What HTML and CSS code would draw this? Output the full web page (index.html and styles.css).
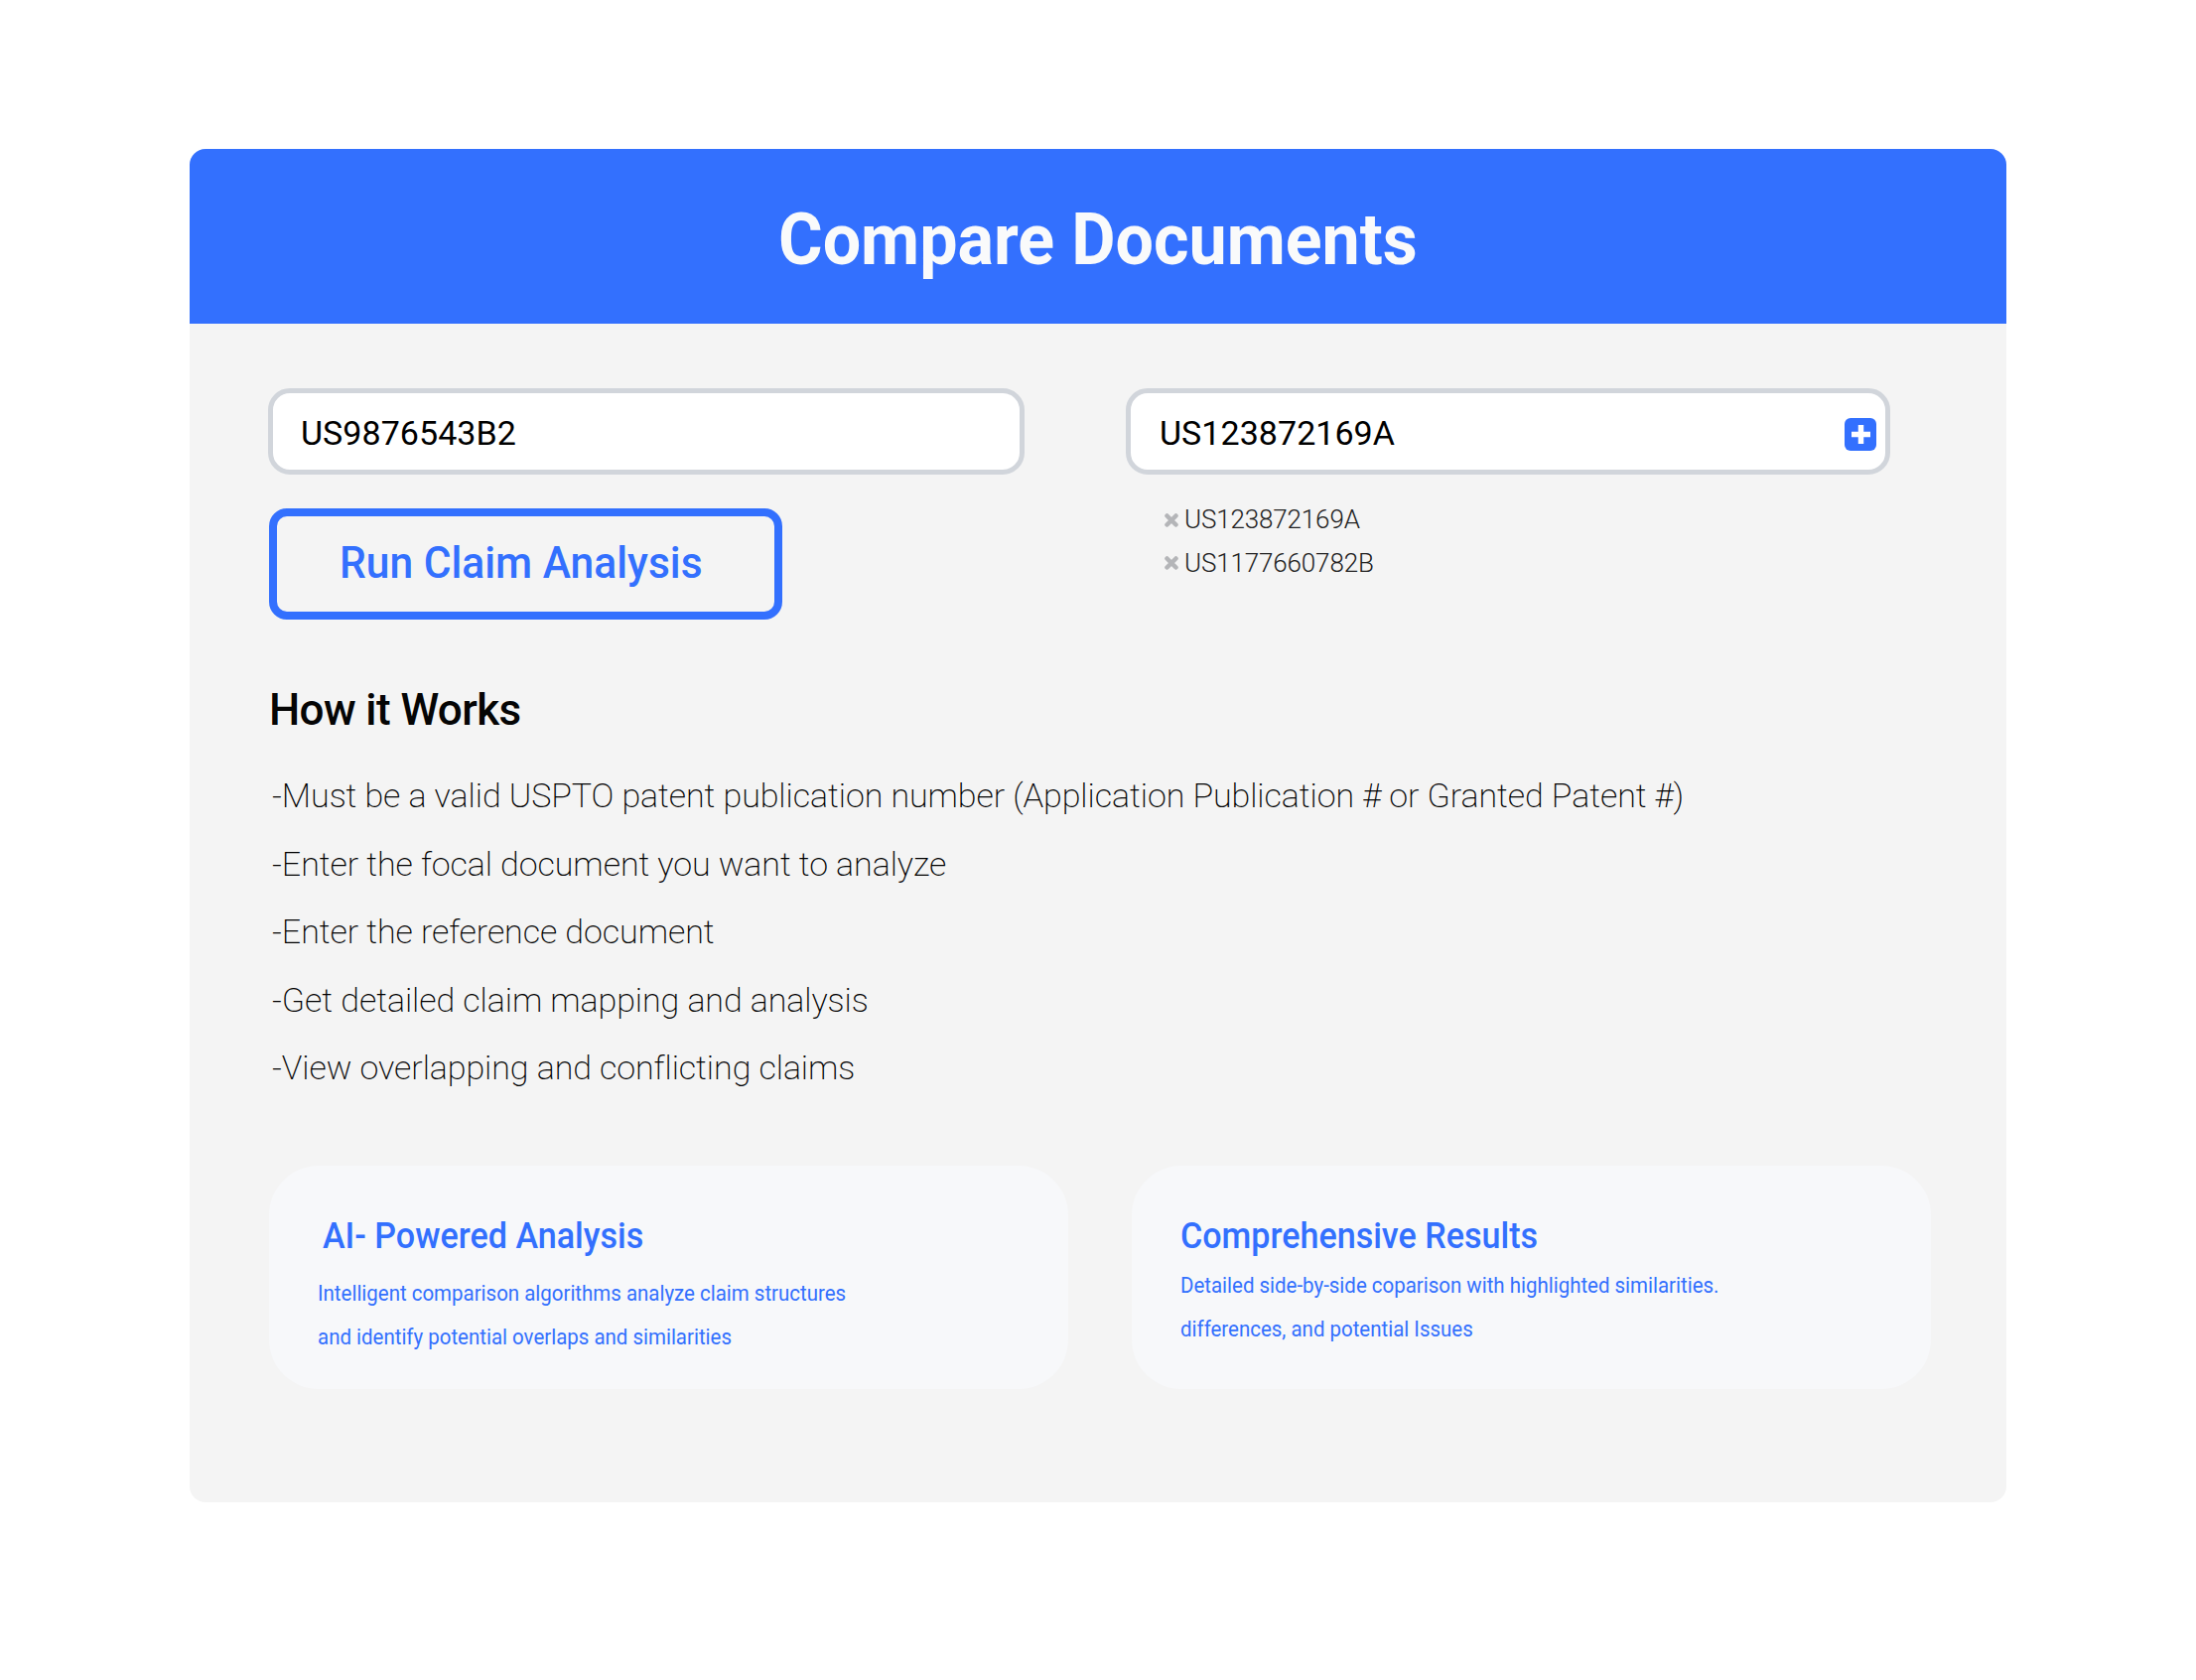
FILE: index.html
```html
<!DOCTYPE html>
<html lang="en">
<head>
<meta charset="utf-8">
<title>Compare Documents</title>
<link rel="stylesheet" href="styles.css">
</head>
<body>
<main class="panel">
  <header class="panel-header"><h1 class="title">Compare Documents</h1></header>
  <div class="panel-body">
    <section class="form">
      <div class="col-focal">
        <div class="field"><span class="field-value">US9876543B2</span></div>
        <button class="run-btn" type="button"><span class="run-label">Run Claim Analysis</span></button>
      </div>
      <div class="col-ref">
        <div class="field field-ref">
          <span class="field-value">US123872169A</span>
          <span class="add-btn"><svg width="19" height="19" viewBox="0 0 19 19"><path d="M9.5 0v19M0 9.500h19" stroke="#fff" stroke-width="5.5"/></svg></span>
        </div>
        <ul class="chips">
          <li class="chip"><svg class="chip-x" width="14" height="14" viewBox="0 0 14 14"><path d="M2.500 2.500l9 9M11.500 2.500l-9 9" stroke="#b4b5b8" stroke-width="4.500" stroke-linecap="round"/></svg>US123872169A</li>
          <li class="chip"><svg class="chip-x" width="14" height="14" viewBox="0 0 14 14"><path d="M2.500 2.500l9 9M11.500 2.500l-9 9" stroke="#b4b5b8" stroke-width="4.500" stroke-linecap="round"/></svg>US1177660782B</li>
        </ul>
      </div>
    </section>
    <section class="how">
      <h2 class="how-title">How it Works</h2>
      <ul class="how-list">
        <li>-Must be a valid USPTO patent publication number (Application Publication # or Granted Patent #)</li>
        <li>-Enter the focal document you want to analyze</li>
        <li>-Enter the reference document</li>
        <li>-Get detailed claim mapping and analysis</li>
        <li>-View overlapping and conflicting claims</li>
      </ul>
    </section>
    <section class="cards">
      <article class="card card-ai">
        <h3 class="card-title">AI- Powered Analysis</h3>
        <p class="card-text">Intelligent comparison algorithms analyze claim structures<br>and identify potential overlaps and similarities</p>
      </article>
      <article class="card card-results">
        <h3 class="card-title">Comprehensive Results</h3>
        <p class="card-text">Detailed side-by-side coparison with highlighted similarities.<br>differences, and potential Issues</p>
      </article>
    </section>
  </div>
</main>
</body>
</html>
```

FILE: styles.css
```css
* { box-sizing: border-box; }
html, body { margin: 0; padding: 0; background: #fff; }
body { font-family: Roboto, "Liberation Sans", sans-serif; padding: 150px 191px 179px; color: #000; }

.panel { width: 1830px; height: 1363px; background: #f4f4f4; border-radius: 16px; overflow: hidden; }
.panel-header { height: 176px; padding-top: 8px; background: #3370fe; display: flex; align-items: center; justify-content: center; }
.title { margin: 0; font-size: 72px; font-weight: 700; line-height: 80px; color: #f9fafb; transform: scaleX(0.947); }

.panel-body { padding: 65px 77px 0 79px; }
.form { display: grid; grid-template-columns: 762px 770px; column-gap: 102px; height: 298px; }
.field { height: 87px; background: #fff; border: 5px solid #d1d5db; border-radius: 22px; padding: 0 9px 0 28px; display: flex; align-items: center; justify-content: space-between; }
.field-ref { padding-left: 29px; }
.field-value { font-size: 34px; line-height: 40px; letter-spacing: 0.05px; position: relative; top: 1px; }
.add-btn { width: 32px; height: 33px; margin-top: 6px; background: #3370fe; border-radius: 6px; display: flex; align-items: center; justify-content: center; }

.run-btn { display: block; width: 517px; height: 112px; margin-top: 34px; margin-left: 1px; background: transparent; border: 8px solid #3370fe; border-radius: 18px; color: #3370fe; font: 500 44px/52px Roboto, sans-serif; padding: 0 0 2px 63px; text-align: left; }
.run-label { display: inline-block; transform: scaleX(0.967); transform-origin: left center; }

.chips { list-style: none; margin: 24px 0 0; padding: 0 0 0 39px; }
.chip { display: flex; align-items: center; gap: 6px; font-size: 26px; font-weight: 300; line-height: 43.500px; letter-spacing: -0.15px; color: #222; }

.how-title { margin: 0 0 0 1px; font-size: 44px; font-weight: 500; line-height: 52px; letter-spacing: -0.6px; color: #050505; }
.how-list { list-style: none; margin: 26px 0 0 4px; padding: 0; }
.how-list li { font-size: 34px; font-weight: 200; line-height: 68.5px; letter-spacing: -0.07px; color: #000; }

.cards { display: grid; grid-template-columns: 805px 805px; column-gap: 64px; margin: 64px 0 0 1px; }
.card { height: 225px; background: #f7f8fa; border-radius: 50px; padding: 49px 49px 0; color: #3370fe; }
.card-title { margin: 0; font-size: 36px; font-weight: 500; line-height: 44px; transform: scaleX(0.947); transform-origin: left center; }
.card-text { margin: 0; font-size: 22px; line-height: 44px; transform: scaleX(0.93); transform-origin: left center; }
.card-ai .card-title { margin-left: 5px; margin-bottom: 14px; }
.card-results .card-title { margin-bottom: 6px; }
```
